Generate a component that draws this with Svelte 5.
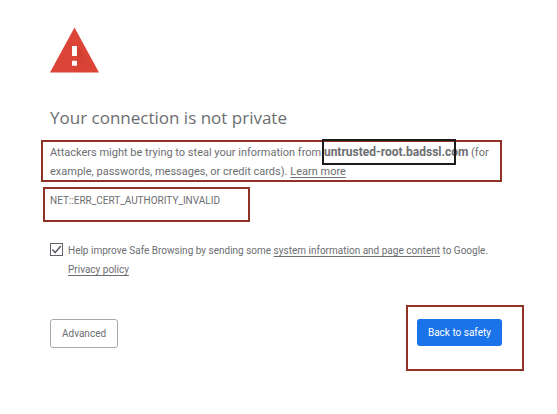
<script>
  let reporting = $state(true);
</script>

<main>
  <svg class="warning" viewBox="0 0 50 46" aria-hidden="true">
    <defs>
      <linearGradient id="shade" x1="0" y1="0" x2="1" y2="1">
        <stop offset="0" stop-color="#b93221" stop-opacity="0.65" />
        <stop offset="1" stop-color="#db4437" stop-opacity="0" />
      </linearGradient>
    </defs>
    <path d="M25 0 L50 46 H0 Z" fill="#db4437" />
    <path d="M27 19 L38 30 L46 46 H29 L22 39 L27 34 Z" fill="url(#shade)" />
    <path d="M22.5 19 H27.5 V29 H22.5 Z M22.5 34 H27.5 V39 H22.5 Z" fill="#fff" />
  </svg>

  <h1>Your connection is not private</h1>

  <p class="message marked">
    Attackers might be trying to steal your information from
    <strong>untrusted-root.badssl.com</strong> (for<br />
    example, passwords, messages, or credit cards). <a href="#learn">Learn more</a>
  </p>

  <p class="code marked">NET::ERR_CERT_AUTHORITY_INVALID</p>

  <div class="report">
    <span class="check">
      <input id="report" type="checkbox" bind:checked={reporting} />
      <svg viewBox="0 0 12 12" aria-hidden="true">
        <path d="M2.2 6 L4.8 8.8 L10 2.8" fill="none" stroke="#5f6368" stroke-width="1.5" />
      </svg>
    </span>
    <label for="report">
      Help improve Safe Browsing by sending some
      <a href="#info">system information and page content</a> to Google.<br />
      <a href="#privacy">Privacy policy</a>
    </label>
  </div>

  <div class="actions">
    <button class="secondary" type="button">Advanced</button>
    <span class="marked safety"><button class="primary" type="button">Back to safety</button></span>
  </div>
</main>

<style>
  :global(body) {
    background: #fff;
  }
  main {
    padding: 27px 55px 40px 50px;
    color: #6c6e71;
    font-family: Roboto, "Noto Sans", sans-serif;
    font-size: 11px;
  }
  .warning {
    display: block;
    width: 49px;
    height: 46px;
  }
  h1 {
    margin: 32px 0 12px;
    font-family: "Open Sans", "Noto Sans", sans-serif;
    font-size: 17px;
    line-height: 26px;
    font-weight: 400;
  }
  p {
    margin: 0;
  }
  .marked {
    position: relative;
  }
  .marked::after,
  strong::after {
    content: "";
    position: absolute;
    border: 2px solid #8f3424;
    pointer-events: none;
  }
  .message {
    line-height: 19px;
    white-space: nowrap;
  }
  .message::after {
    inset: -3px 0 -1px -9px;
  }
  strong {
    position: relative;
    font-size: 12px;
    line-height: 18px;
    font-weight: 700;
  }
  strong::after {
    inset: -6px 12px -6px -2px;
    border-color: #1c1c1f;
    z-index: 1;
  }
  .code {
    width: 200px;
    margin-top: 10px;
    font-size: 10px;
    line-height: 19px;
  }
  .code::after {
    inset: -4px 0 -12px -7px;
  }
  .report {
    display: flex;
    gap: 5px;
    margin-top: 31px;
    font-size: 10px;
    line-height: 19px;
    white-space: nowrap;
  }
  .check {
    position: relative;
    flex: none;
    width: 13px;
    height: 13px;
    margin-top: 2px;
  }
  .check input {
    appearance: none;
    display: block;
    width: 13px;
    height: 13px;
    margin: 0;
    border: 1px solid #5f6368;
  }
  .check svg {
    position: absolute;
    inset: 0;
    pointer-events: none;
  }
  .check input:not(:checked) + svg {
    display: none;
  }
  a {
    color: inherit;
    text-decoration: underline;
    text-underline-offset: 2px;
  }
  .actions {
    display: flex;
    justify-content: space-between;
    align-items: flex-start;
    margin-top: 40px;
  }
  button {
    display: block;
    box-sizing: border-box;
    padding: 0 11px;
    border-radius: 3px;
    font: inherit;
    font-size: 10px;
    white-space: nowrap;
  }
  .secondary {
    height: 29px;
    border: 1px solid #a5a9ae;
    background: #fff;
    color: #6c6e71;
  }
  .primary {
    height: 27px;
    border: 0;
    background: #1a73e8;
    color: #fff;
  }
  .safety::after {
    inset: -14px -22px -25px -11px;
  }
</style>
